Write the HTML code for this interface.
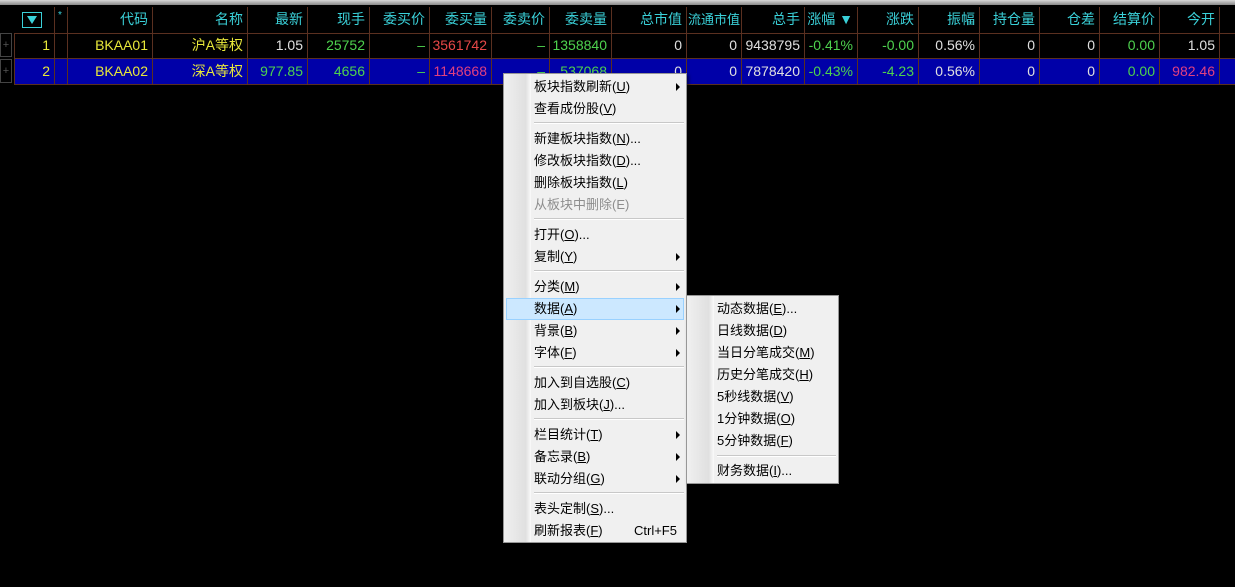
<!DOCTYPE html>
<html><head><meta charset="utf-8"><style>
body{margin:0;width:1235px;height:587px;background:#000;position:relative;overflow:hidden;font-family:"Liberation Sans","Noto Sans CJK SC",sans-serif;font-size:14px}
.top{position:absolute;left:0;top:0;width:1235px;height:5px;background:linear-gradient(#d8d8d8,#888)}
.c{position:absolute;height:25px;line-height:25px;text-align:right;padding-right:4px;box-sizing:border-box;border-right:1px solid #5a3020;white-space:nowrap;overflow:hidden}
.h{color:#3ad0d8}
.row{position:absolute;left:14px;width:1221px;height:25px;border-bottom:1px solid #5a3020}
.m{position:absolute;background:#f0f0f0;border:1px solid #979797;box-shadow:2px 2px 3px rgba(0,0,0,.5)}
.m .g{position:absolute;left:0;top:0;bottom:0;width:27px;background:linear-gradient(90deg,#f0f0f0,#e0e0e0 80%,#fafafa)}
.i{position:absolute;left:30px;height:22px;line-height:22px;color:#000;font-size:13px}
.i.d{color:#8d8d8d}
.ar{position:absolute;right:6px;width:0;height:0;border-left:4px solid #000;border-top:4px solid transparent;border-bottom:4px solid transparent}
.s{position:absolute;left:30px;right:2px;height:1px;background:#c8c8c8;border-bottom:1px solid #fff}
.hl{position:absolute;left:2px;right:2px;height:22px;background:#cce8ff;border:1px solid #99d1ff;box-sizing:border-box}
u{text-decoration:underline}
</style></head><body>
<div class="top"></div>
<div style="position:absolute;left:0;top:33px;width:12px;height:24px;border:1px solid #444;box-sizing:border-box;color:#555;font-size:11px;text-align:center;line-height:22px">+</div>
<div style="position:absolute;left:0;top:59px;width:12px;height:24px;border:1px solid #444;box-sizing:border-box;color:#555;font-size:11px;text-align:center;line-height:22px">+</div>
<div class="row" style="top:7px;height:26px"></div>
<div class="row" style="top:33px"></div>
<div class="row" style="top:59px;background:#0000a8"></div>
<div style="position:absolute;left:14px;top:33px;width:1px;height:52px;background:#5a3020"></div>
<div id="t"></div>
<script>
const cols=[[14,55],[55,68],[68,153],[153,248],[248,308],[308,370],[370,430],[430,492],[492,550],[550,612],[612,687],[687,742],[742,805],[805,858],[858,919],[919,980],[980,1040],[1040,1100],[1100,1160],[1160,1220],[1220,1300]];
const H=["","*","代码","名称","最新","现手","委买价","委买量","委卖价","委卖量","总市值","流通市值","总手","涨幅 ▼","涨跌","振幅","持仓量","仓差","结算价","今开",""];
const Y='#e8e83a',W='#e0e0e0',G='#4ed24e',R='#e84848',C='#3ad0d8',P='#e04080';
const r1=[["1",Y],["",W],["BKAA01",Y],["沪A等权",Y],["1.05",W],["25752",G],["–",G],["3561742",R],["–",G],["1358840",G],["0",W],["0",W],["9438795",W],["-0.41%",G],["-0.00",G],["0.56%",W],["0",W],["0",W],["0.00",G],["1.05",W],["",W]];
const r2=[["2",Y],["",W],["BKAA02",Y],["深A等权",Y],["977.85",G],["4656",G],["–",G],["1148668",P],["–",G],["537068",G],["0",W],["0",W],["7878420",W],["-0.43%",G],["-4.23",G],["0.56%",W],["0",W],["0",W],["0.00",G],["982.46",P],["9",P]];
let s='';
cols.forEach((c,i)=>{
 let w=c[1]-c[0];
 let hc=H[i];
 if(i==0) hc='<span style="display:inline-block;width:18px;height:14px;border:1px solid #3ad0d8;vertical-align:middle;position:relative;margin-right:8px"><span style="position:absolute;left:4px;top:3px;border-left:5px solid transparent;border-right:5px solid transparent;border-top:8px solid #3ad0d8"></span></span>';
 let fs=(i==11)?'font-size:13px;padding-right:1px;':'';
 s+=`<div class="c h" style="left:${c[0]}px;top:7px;width:${w}px;height:26px;${fs}${i==1?'text-align:left;padding-left:3px;font-size:10px;line-height:18px':''}">${hc}</div>`;
 s+=`<div class="c" style="left:${c[0]}px;top:33px;width:${w}px;color:${r1[i][1]}">${r1[i][0]}</div>`;
 s+=`<div class="c" style="left:${c[0]}px;top:59px;width:${w}px;color:${r2[i][1]}">${r2[i][0]}</div>`;
});
document.getElementById('t').innerHTML=s;
</script>
<div class="m" style="left:503px;top:73px;width:182px;height:468px">
<div class="g"></div>
<div class="i" style="top:2px">板块指数刷新(<u>U</u>)</div><div class="ar" style="top:9px"></div>
<div class="i" style="top:24px">查看成份股(<u>V</u>)</div>
<div class="s" style="top:48px"></div>
<div class="i" style="top:54px">新建板块指数(<u>N</u>)...</div>
<div class="i" style="top:76px">修改板块指数(<u>D</u>)...</div>
<div class="i" style="top:98px">删除板块指数(<u>L</u>)</div>
<div class="i d" style="top:120px">从板块中删除(E)</div>
<div class="s" style="top:144px"></div>
<div class="i" style="top:150px">打开(<u>O</u>)...</div>
<div class="i" style="top:172px">复制(<u>Y</u>)</div><div class="ar" style="top:179px"></div>
<div class="s" style="top:196px"></div>
<div class="i" style="top:202px">分类(<u>M</u>)</div><div class="ar" style="top:209px"></div>
<div class="hl" style="top:224px"></div>
<div class="i" style="top:224px">数据(<u>A</u>)</div><div class="ar" style="top:231px"></div>
<div class="i" style="top:246px">背景(<u>B</u>)</div><div class="ar" style="top:253px"></div>
<div class="i" style="top:268px">字体(<u>F</u>)</div><div class="ar" style="top:275px"></div>
<div class="s" style="top:292px"></div>
<div class="i" style="top:298px">加入到自选股(<u>C</u>)</div>
<div class="i" style="top:320px">加入到板块(<u>J</u>)...</div>
<div class="s" style="top:344px"></div>
<div class="i" style="top:350px">栏目统计(<u>T</u>)</div><div class="ar" style="top:357px"></div>
<div class="i" style="top:372px">备忘录(<u>B</u>)</div><div class="ar" style="top:379px"></div>
<div class="i" style="top:394px">联动分组(<u>G</u>)</div><div class="ar" style="top:401px"></div>
<div class="s" style="top:418px"></div>
<div class="i" style="top:424px">表头定制(<u>S</u>)...</div>
<div class="i" style="top:446px">刷新报表(<u>F</u>)</div><div class="i" style="top:446px;left:130px">Ctrl+F5</div>
</div>
<div class="m" style="left:686px;top:295px;width:151px;height:187px">
<div class="g"></div>
<div class="i" style="top:2px">动态数据(<u>E</u>)...</div>
<div class="i" style="top:24px">日线数据(<u>D</u>)</div>
<div class="i" style="top:46px">当日分笔成交(<u>M</u>)</div>
<div class="i" style="top:68px">历史分笔成交(<u>H</u>)</div>
<div class="i" style="top:90px">5秒线数据(<u>V</u>)</div>
<div class="i" style="top:112px">1分钟数据(<u>O</u>)</div>
<div class="i" style="top:134px">5分钟数据(<u>F</u>)</div>
<div class="s" style="top:159px"></div>
<div class="i" style="top:164px">财务数据(<u>I</u>)...</div>
</div>
</body></html>
